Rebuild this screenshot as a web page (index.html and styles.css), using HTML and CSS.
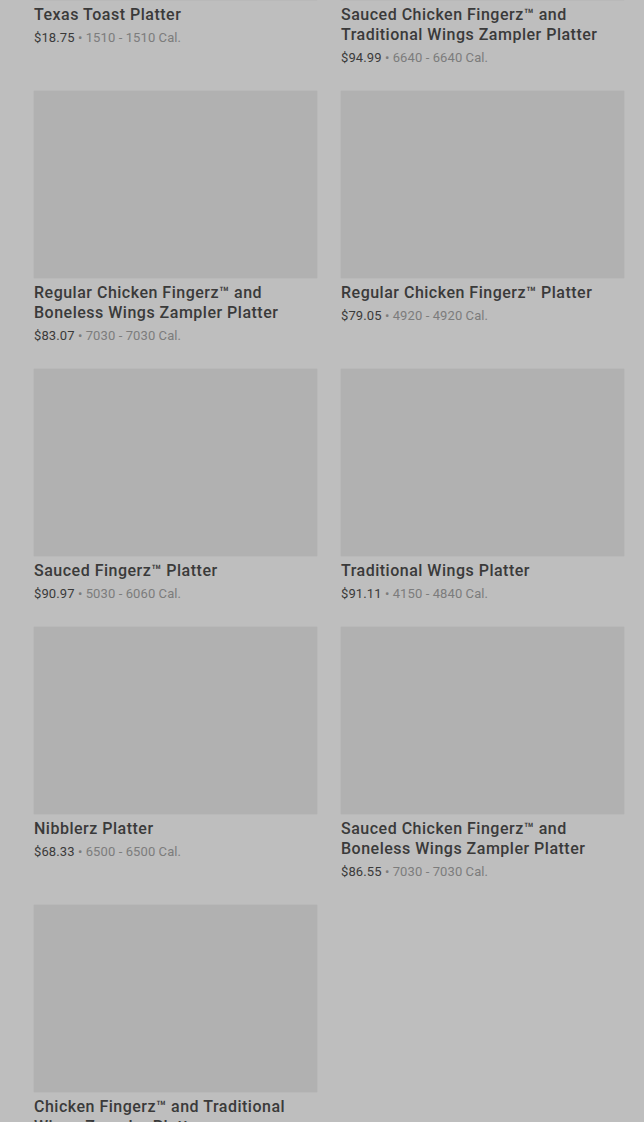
FILE: index.html
```html
<!DOCTYPE html>
<html lang="en">
<head>
    <meta charset="UTF-8">
    <meta name="viewport" content="width=device-width, initial-scale=1.0">
    <title>Platters</title>
    <link rel="stylesheet" href="styles.css">
</head>
<body>
    <div class="menu-list">
        <div class="item">
            <div class="item-img"></div>
            <div class="item-name">Texas Toast Platter</div>
            <div class="item-meta"><span class="price">$18.75</span> • 1510 - 1510 Cal.</div>
        </div>
        <div class="item">
            <div class="item-img"></div>
            <div class="item-name">Sauced Chicken Fingerz™ and Traditional Wings Zampler Platter</div>
            <div class="item-meta"><span class="price">$94.99</span> • 6640 - 6640 Cal.</div>
        </div>
        <div class="item">
            <div class="item-img"></div>
            <div class="item-name">Regular Chicken Fingerz™ and Boneless Wings Zampler Platter</div>
            <div class="item-meta"><span class="price">$83.07</span> • 7030 - 7030 Cal.</div>
        </div>
        <div class="item">
            <div class="item-img"></div>
            <div class="item-name">Regular Chicken Fingerz™ Platter</div>
            <div class="item-meta"><span class="price">$79.05</span> • 4920 - 4920 Cal.</div>
        </div>
        <div class="item">
            <div class="item-img"></div>
            <div class="item-name">Sauced Fingerz™ Platter</div>
            <div class="item-meta"><span class="price">$90.97</span> • 5030 - 6060 Cal.</div>
        </div>
        <div class="item">
            <div class="item-img"></div>
            <div class="item-name">Traditional Wings Platter</div>
            <div class="item-meta"><span class="price">$91.11</span> • 4150 - 4840 Cal.</div>
        </div>
        <div class="item">
            <div class="item-img"></div>
            <div class="item-name">Nibblerz Platter</div>
            <div class="item-meta"><span class="price">$68.33</span> • 6500 - 6500 Cal.</div>
        </div>
        <div class="item">
            <div class="item-img"></div>
            <div class="item-name">Sauced Chicken Fingerz™ and Boneless Wings Zampler Platter</div>
            <div class="item-meta"><span class="price">$86.55</span> • 7030 - 7030 Cal.</div>
        </div>
        <div class="item">
            <div class="item-img"></div>
            <div class="item-name">Chicken Fingerz™ and Traditional Wings Zampler Platter</div>
            <div class="item-meta"><span class="price">$78.40</span> • 6020 - 6020 Cal.</div>
        </div>
    </div>
</body>
</html>
```

FILE: styles.css
```css
html, body {
    margin: 0;
    padding: 0;
    background: #bebebe;
    overflow: hidden;
}
body {
    font-family: Roboto, "Noto Sans", sans-serif;
    color: #3a3a3a;
}
.menu-list {
    display: grid;
    grid-template-columns: 283px 283px;
    column-gap: 24px;
    row-gap: 23px;
    align-items: start;
    padding-left: 34px;
    margin-top: -187px; /* list is scrolled */
}
.item-img {
    height: 187px;
    background: #b1b1b1;
    box-shadow: 0 0 1px rgba(0,0,0,0.15);
}
.item-name {
    margin-top: 5px;
    font-size: 16px;
    font-weight: 500;
    line-height: 20px;
    letter-spacing: 0.5px;
    color: #3a3a3a;
}
.item-meta {
    margin-top: 3px;
    font-size: 13px;
    line-height: 20px;
    letter-spacing: 0.1px;
    color: #7c7c7c;
}
.price {
    color: #3a3a3a;
}
```
